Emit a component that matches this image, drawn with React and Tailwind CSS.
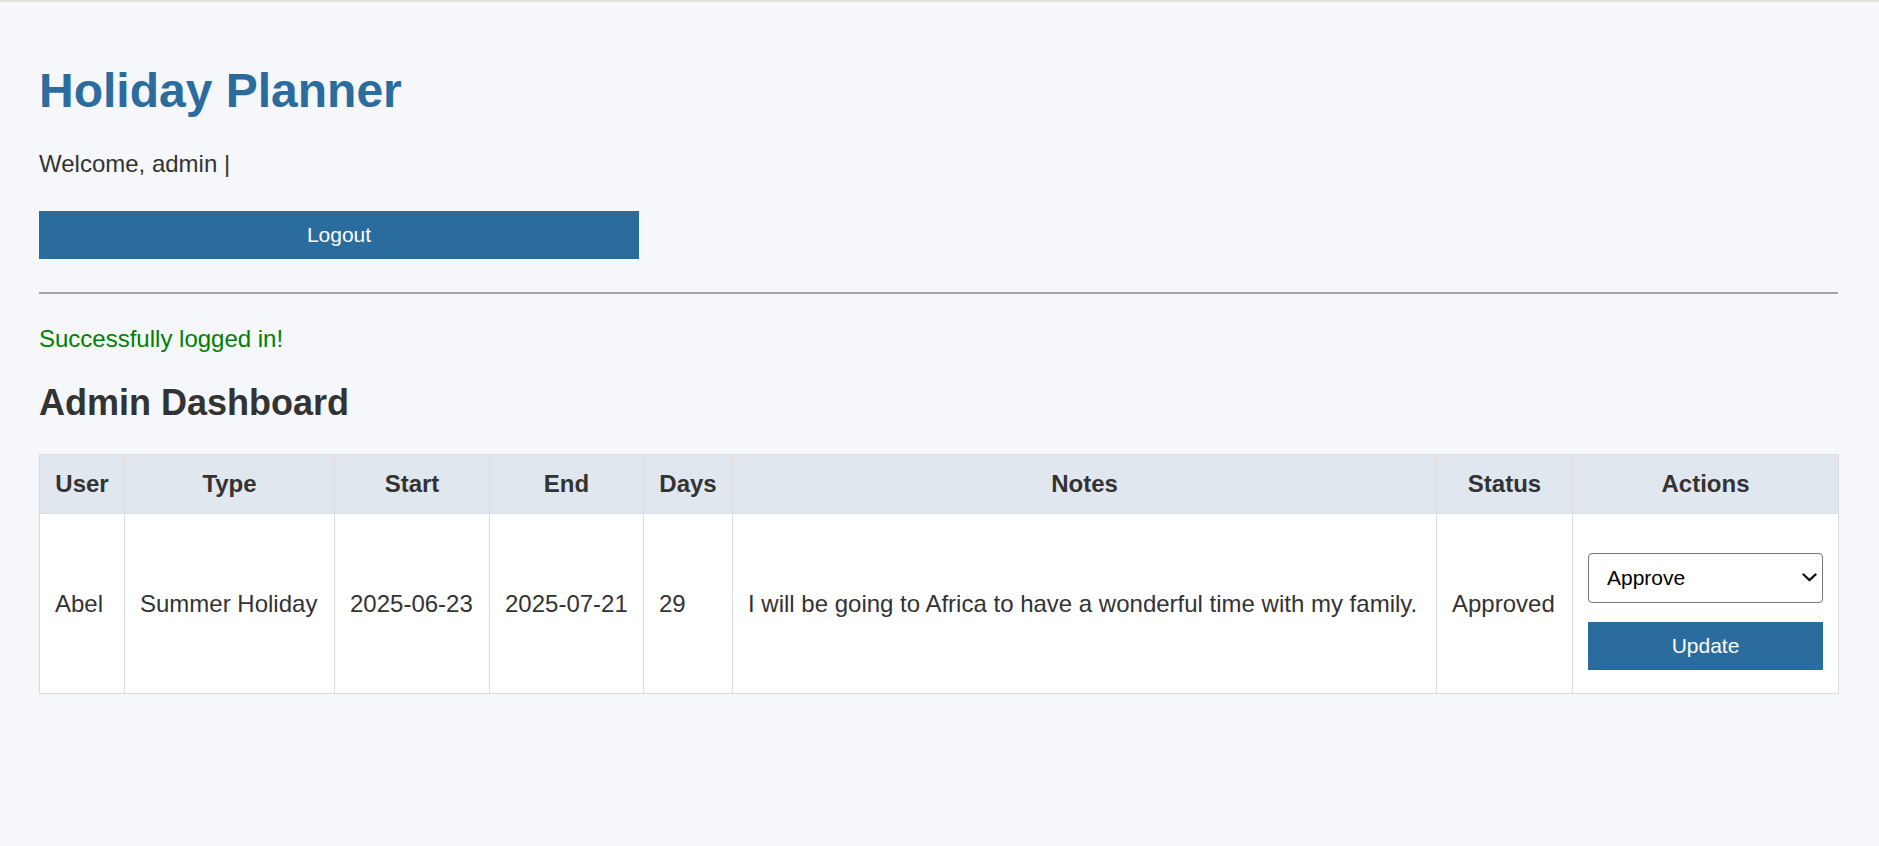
import React, { useState } from 'react';

const requests = [
  {
    id: 1,
    user: 'Abel',
    type: 'Summer Holiday',
    start: '2025-06-23',
    end: '2025-07-21',
    days: 29,
    notes: 'I will be going to Africa to have a wonderful time with my family.',
    status: 'Approved'
  }
];

// column widths taken from the layout
const columns = [
  { label: 'User', w: 'w-[85px]' },
  { label: 'Type', w: 'w-[210px]' },
  { label: 'Start', w: 'w-[155px]' },
  { label: 'End', w: 'w-[154px]' },
  { label: 'Days', w: 'w-[89px]' },
  { label: 'Notes', w: 'w-[704px]' },
  { label: 'Status', w: 'w-[136px]' },
  { label: 'Actions', w: 'w-[266px]' }
];

function ActionCell({ request }) {
  const [choice, setChoice] = useState('Approve');

  return (
    <td className="border border-[#dcdcdc] px-[15px] pt-[39px] pb-[23px] align-top">
      <div className="relative">
        <select
          value={choice}
          onChange={(e) => setChoice(e.target.value)}
          className="appearance-none w-full h-[50px] bg-white border border-[#767676] rounded-[4px] pl-[18px] pr-8 text-[21px] text-black outline-none"
        >
          <option>Approve</option>
          <option>Reject</option>
          <option>Pending</option>
        </select>
        <svg
          className="absolute right-[6px] top-[20px] pointer-events-none"
          width="15"
          height="9"
          viewBox="0 0 15 9"
          fill="none"
        >
          <path d="M1.5 1.5 L7.5 7.2 L13.5 1.5" stroke="#111" strokeWidth="2.4" strokeLinecap="round" strokeLinejoin="round" />
        </svg>
      </div>
      <button className="mt-[19px] w-full h-[48px] bg-[#2a6c9e] text-white text-[21px] leading-[24px]">
        Update
      </button>
    </td>
  );
}

export default function App() {
  return (
    <div className="min-h-screen bg-[#f5f7fa] text-[#333] font-['Liberation_Sans',Arial,sans-serif]">
      <div className="h-[2px] bg-[#e2e2e2]" />
      <div className="pl-[39px] pr-[41px] pt-[61px] pb-10">
        {/* Header */}
        <h1 className="text-[48px] leading-[55px] font-bold text-[#2a6c9e]">Holiday Planner</h1>
        <p className="mt-[32px] text-[24px] leading-[28px]">Welcome, admin |</p>
        <button className="mt-[33px] w-[600px] h-[48px] bg-[#2a6c9e] text-white text-[21px] leading-[24px]">
          Logout
        </button>
        <div className="mt-[33px] h-[2px] bg-[#a3a3a3]" />

        <p className="mt-[31px] text-[24px] leading-[28px] text-[#008000]">Successfully logged in!</p>
        <h2 className="mt-[29px] text-[36px] leading-[41px] font-bold">Admin Dashboard</h2>

        {/* Requests table */}
        <table className="mt-[31px] w-full table-fixed border-collapse bg-white text-[24px] leading-[28px]">
          <thead>
            <tr className="bg-[#e1e7ef]">
              {columns.map((c) => (
                <th key={c.label} className={`${c.w} border border-[#dcdcdc] p-[15px] font-bold text-center`}>
                  {c.label}
                </th>
              ))}
            </tr>
          </thead>
          <tbody>
            {requests.map((r) => (
              <tr key={r.id}>
                <td className="border border-[#dcdcdc] px-[15px] align-middle">{r.user}</td>
                <td className="border border-[#dcdcdc] px-[15px] align-middle">{r.type}</td>
                <td className="border border-[#dcdcdc] px-[15px] align-middle">{r.start}</td>
                <td className="border border-[#dcdcdc] px-[15px] align-middle">{r.end}</td>
                <td className="border border-[#dcdcdc] px-[15px] align-middle">{r.days}</td>
                <td className="border border-[#dcdcdc] px-[15px] align-middle">{r.notes}</td>
                <td className="border border-[#dcdcdc] px-[15px] align-middle">{r.status}</td>
                <ActionCell request={r} />
              </tr>
            ))}
          </tbody>
        </table>
      </div>
    </div>
  );
}
